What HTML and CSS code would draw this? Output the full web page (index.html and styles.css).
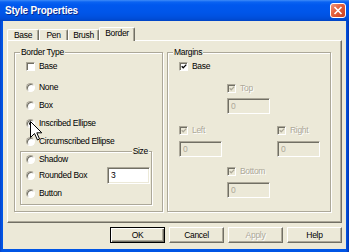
FILE: index.html
```html
<!DOCTYPE html>
<html>
<head>
<meta charset="utf-8">
<title>Style Properties</title>
<link rel="stylesheet" href="styles.css">
</head>
<body>
<div class="window">
  <div class="titlebar">
    <span class="title">Style Properties</span>
    <svg class="close" width="16" height="15" viewBox="0 0 16 15">
      <defs><linearGradient id="cg" x1="0" y1="0" x2="1" y2="1"><stop offset="0" stop-color="#F39A7E"/><stop offset="0.45" stop-color="#E35F3B"/><stop offset="1" stop-color="#C94020"/></linearGradient></defs>
      <rect x="0.5" y="0.5" width="15" height="14" rx="2.5" fill="url(#cg)" stroke="#fff"/>
      <path d="M4.5 4L11.5 11M11.5 4L4.5 11" stroke="#fff" stroke-width="1.7"/>
    </svg>
  </div>
  <div class="frame">
    <div class="tabs">
      <div class="tab t-base">Base</div>
      <div class="tab t-pen">Pen</div>
      <div class="tab t-brush">Brush</div>
      <div class="tab t-border active">Border</div>
    </div>
    <div class="panel">
      <div class="group g-left">
        <span class="glabel">Border Type</span>
        <div class="row first"><span class="cb"></span>Base</div>
        <div class="row"><span class="radio"></span>None</div>
        <div class="row"><span class="radio"></span>Box</div>
        <div class="row"><span class="radio on"></span>Inscribed Ellipse</div>
        <div class="row"><span class="radio"></span>Circumscribed Ellipse</div>
        <div class="group inner">
          <span class="glabel right">Size</span>
          <div class="row short"><span class="radio"></span>Shadow</div>
          <div class="row"><span class="radio"></span>Rounded Box<span class="tb enabled">3</span></div>
          <div class="row"><span class="radio"></span>Button</div>
        </div>
      </div>
      <div class="group g-right">
        <span class="glabel">Margins</span>
        <div class="mrow"><div class="cell row"><span class="cb checked"><svg width="7" height="7" viewBox="0 0 7 7"><path d="M0.8 3.2L2.6 5L6.2 1.4" fill="none" stroke="#000" stroke-width="1.4"/></svg></span>Base</div></div>
        <div class="mrow m-top"><div class="cell c2 row dis"><span class="cb checked disabled"><svg width="7" height="7" viewBox="0 0 7 7"><path d="M0.8 3.2L2.6 5L6.2 1.4" fill="none" stroke="#ACA899" stroke-width="1.4"/></svg></span>Top</div></div>
        <div class="mrow tbrow t1"><span class="tb c2">0</span></div>
        <div class="mrow m-lr"><div class="cell c1 row dis"><span class="cb checked disabled"><svg width="7" height="7" viewBox="0 0 7 7"><path d="M0.8 3.2L2.6 5L6.2 1.4" fill="none" stroke="#ACA899" stroke-width="1.4"/></svg></span>Left</div><div class="cell c3 row dis"><span class="cb checked disabled"><svg width="7" height="7" viewBox="0 0 7 7"><path d="M0.8 3.2L2.6 5L6.2 1.4" fill="none" stroke="#ACA899" stroke-width="1.4"/></svg></span>Right</div></div>
        <div class="mrow tbrow t2"><span class="tb c1">0</span><span class="tb c3">0</span></div>
        <div class="mrow m-bottom"><div class="cell c2 row dis"><span class="cb checked disabled"><svg width="7" height="7" viewBox="0 0 7 7"><path d="M0.8 3.2L2.6 5L6.2 1.4" fill="none" stroke="#ACA899" stroke-width="1.4"/></svg></span>Bottom</div></div>
        <div class="mrow tbrow t3"><span class="tb c2">0</span></div>
      </div>
    </div>
    <div class="buttons">
      <div class="btn default">OK</div>
      <div class="btn">Cancel</div>
      <div class="btn disabled">Apply</div>
      <div class="btn">Help</div>
    </div>
  </div>
  <svg class="cursor" width="13" height="21" viewBox="0 0 13 21"><path d="M0.5 0.5L0.5 16.5L4.5 12.5L7.5 19L9.5 18L6.8 11.8L11.8 11.8Z" fill="#fff" stroke="#000" stroke-width="1" stroke-linejoin="miter"/></svg>
</div>
</body>
</html>
```

FILE: styles.css
```css
* { box-sizing: border-box; }
html, body { margin: 0; padding: 0; }
body {
  width: 349px;
  height: 252px;
  overflow: hidden;
  font-family: "Liberation Sans", Arial, sans-serif;
  font-size: 8.5px;
  letter-spacing: -0.3px;
  color: #000;
  background: #ECE9D8;
}
.window {
  position: relative;
  width: 349px;
  height: 252px;
  display: flex;
  flex-direction: column;
  background: linear-gradient(90deg, #0842C8 0, #0055E5 2px, #0055E5 346px, #0033B0 349px);
}
.titlebar {
  height: 21px;
  flex: none;
  display: flex;
  align-items: center;
  padding: 0 3px 1px 5px;
  background: linear-gradient(#3E8CF8 0, #0A63F2 2px, #0058EE 5px, #0056EA 12px, #0052E2 16px, #004CD6 19px, #0044C4 21px);
}
.title {
  flex: 1;
  color: #fff;
  font-weight: bold;
  font-size: 10px;
  letter-spacing: -0.2px;
  text-shadow: 1px 1px #0B2A8C;
}
.close {
  display: block;
  flex: none;
  margin-top: 1px;
}
.frame {
  flex: 1;
  margin: 0 3px 3px 3px;
  background: #ECE9D8;
  display: flex;
  flex-direction: column;
  padding: 6px 4px 0 4px;
}
.tabs {
  height: 13px;
  display: flex;
  align-items: flex-end;
  position: relative;
  z-index: 2;
}
.tab {
  height: 11px;
  border-left: 1px solid #fff;
  border-top: 1px solid #fff;
  border-right: 1px solid #716F64;
  border-radius: 2px 2px 0 0;
  box-shadow: inset -1px 0 #ACA899;
  text-align: center;
  line-height: 10px;
  background: #ECE9D8;
}
.t-base { width: 32px; }
.t-pen { width: 29px; }
.t-brush { width: 31px; }
.t-border { width: 36px; }
.tab.active {
  height: 14px;
  margin-bottom: -1px;
  line-height: 11px;
}
.panel {
  height: 183px;
  flex: none;
  border: 1px solid;
  border-color: #fff #716F64 #716F64 #fff;
  box-shadow: inset -1px -1px #ACA899;
  display: flex;
  align-items: flex-start;
  gap: 4px;
  padding: 11px 0 0 6px;
}
.group {
  position: relative;
  height: 160px;
  border: 1px solid #ACA899;
  box-shadow: inset 1px 1px #fff, 1px 1px #fff;
  display: flex;
  flex-direction: column;
}
.glabel {
  position: absolute;
  top: -6px;
  left: 5px;
  padding: 0 1px;
  line-height: 10px;
  background: #ECE9D8;
}
.glabel.right { left: auto; right: 2px; }
.g-left { width: 149px; padding: 4px 0 0 11px; }
.g-right { width: 164px; padding: 4px 0 0 11px; }
.row {
  display: flex;
  align-items: center;
  height: 18px;
  gap: 4px;
  white-space: nowrap;
}
.row.first { margin-bottom: 3px; }
.inner {
  width: 132px;
  height: 54px;
  margin: 1px 0 0 -6px;
  padding: 0 1px 0 5px;
}
.row.short { height: 14px; margin-top: 0; }
.cb {
  width: 9px;
  height: 9px;
  flex: none;
  background: #fff;
  border: 1px solid;
  border-color: #ACA899 #fff #fff #ACA899;
  box-shadow: inset 1px 1px #716F64;
  display: flex;
  align-items: center;
  justify-content: center;
  padding: 1px 0 0 1px;
}
.cb svg { display: block; }
.cb.disabled { background: #ECE9D8; }
.radio {
  width: 9px;
  height: 9px;
  flex: none;
  border-radius: 50%;
  background: #fff;
  border: 1px solid;
  border-color: #ACA899 #fff #fff #ACA899;
  box-shadow: inset 1px 1px 0 #716F64;
  display: flex;
  align-items: center;
  justify-content: center;
}
.radio.on::after {
  content: "";
  width: 3px;
  height: 3px;
  border-radius: 50%;
  background: #000;
}
.tb {
  width: 43px;
  height: 16px;
  border: 1px solid;
  border-color: #ACA899 #fff #fff #ACA899;
  box-shadow: inset 1px 1px #716F64, inset -1px -1px #ECE9D8;
  padding: 0 0 0 3px;
  display: flex;
  align-items: center;
  color: #ACA899;
  background: #ECE9D8;
}
.tb.enabled {
  background: #fff;
  color: #000;
  height: 17px;
  margin-left: auto;
}
.mrow {
  display: grid;
  grid-template-columns: 48px 50px 44px;
  height: 18px;
  align-items: center;
}
.c1 { grid-column: 1; }
.c2 { grid-column: 2; }
.c3 { grid-column: 3; }
.dis { color: #ACA899; text-shadow: 1px 1px #fff; }
.m-top { margin-top: 4px; }
.tbrow { height: 16px; }
.t1 { margin-top: 1px; }
.m-lr { margin-top: 7px; }
.t2 { margin-top: 2px; }
.m-bottom { margin-top: 5px; }
.t3 { margin-top: 2px; }
.buttons {
  margin-top: 4px;
  display: flex;
  justify-content: flex-end;
  gap: 4px;
}
.btn {
  width: 55px;
  height: 16px;
  border: 1px solid;
  border-color: #fff #716F64 #716F64 #fff;
  box-shadow: inset -1px -1px #ACA899;
  display: flex;
  align-items: center;
  justify-content: center;
}
.btn.default {
  border-color: #000;
  box-shadow: inset 1px 1px #fff, inset -1px -1px #716F64, inset -2px -2px #ACA899;
}
.btn.disabled { color: #ACA899; text-shadow: 1px 1px #fff; }
.cursor {
  position: absolute;
  left: 30px;
  top: 121px;
}
```
